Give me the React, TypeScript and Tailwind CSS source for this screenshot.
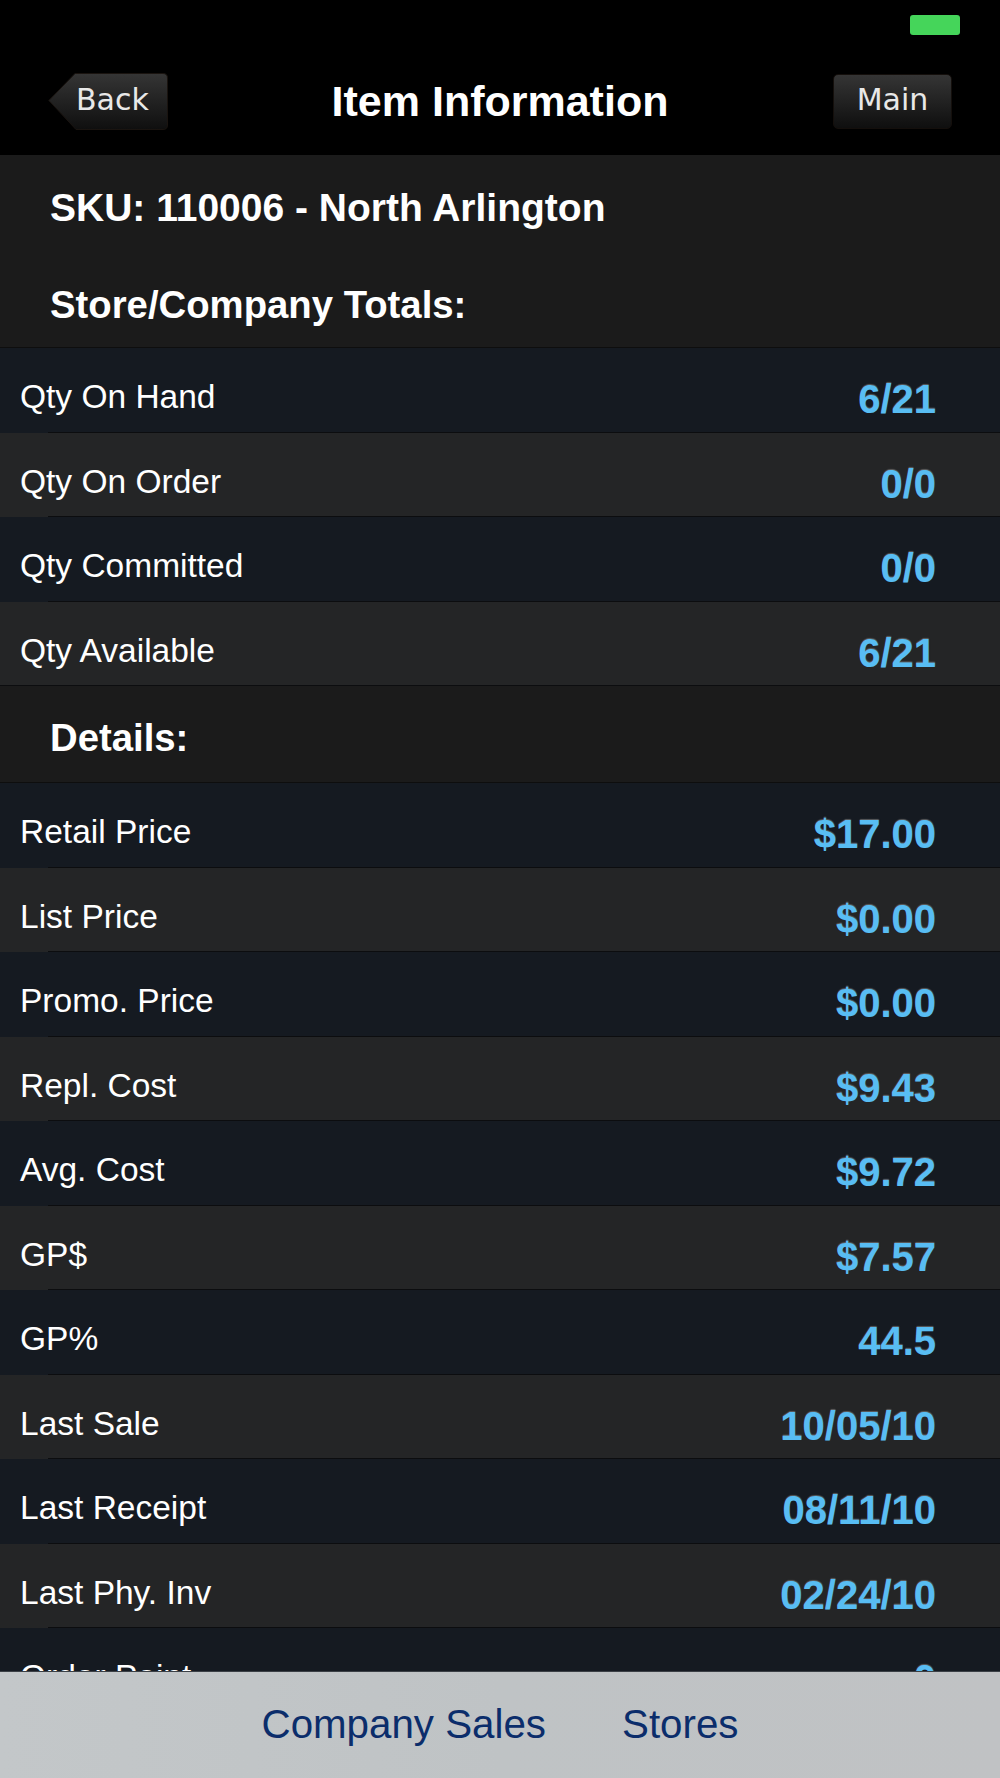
const totals = [
  { label: 'Qty On Hand', value: '6/21' },
  { label: 'Qty On Order', value: '0/0' },
  { label: 'Qty Committed', value: '0/0' },
  { label: 'Qty Available', value: '6/21' },
]

const details = [
  { label: 'Retail Price', value: '$17.00' },
  { label: 'List Price', value: '$0.00' },
  { label: 'Promo. Price', value: '$0.00' },
  { label: 'Repl. Cost', value: '$9.43' },
  { label: 'Avg. Cost', value: '$9.72' },
  { label: 'GP$', value: '$7.57' },
  { label: 'GP%', value: '44.5' },
  { label: 'Last Sale', value: '10/05/10' },
  { label: 'Last Receipt', value: '08/11/10' },
  { label: 'Last Phy. Inv', value: '02/24/10' },
  { label: 'Order Point', value: '0' },
]

function BackButton() {
  return (
    <button className="relative w-[120px] h-[57px] flex items-center pl-[28px] pb-[4px]">
      <svg className="absolute inset-0" width="120" height="57" viewBox="0 0 120 57">
        <defs>
          <linearGradient id="backFill" x1="0" y1="0" x2="0" y2="1">
            <stop offset="0" stopColor="#353535" />
            <stop offset="0.5" stopColor="#222" />
            <stop offset="1" stopColor="#0f0f0f" />
          </linearGradient>
        </defs>
        <path
          d="M27 0.5 H115 Q119.5 0.5 119.5 5 V52 Q119.5 56.5 115 56.5 H28 L0.8 27.5 Z"
          fill="url(#backFill)"
          stroke="#1a1410"
        />
      </svg>
      <span className="relative font-['DejaVu_Sans',sans-serif] text-[30px] leading-none text-[#e8e8e8]">
        Back
      </span>
    </button>
  )
}

function MainButton() {
  return (
    <button className="w-[119px] h-[55px] rounded-[5px] border border-[#140f0c] bg-gradient-to-b from-[#353535] via-[#222] to-[#0f0f0f] flex items-center justify-center pb-[4px]">
      <span className="font-['DejaVu_Sans',sans-serif] text-[30px] leading-none text-[#e8e8e8]">
        Main
      </span>
    </button>
  )
}

function Row({ label, value, dark, full }: { label: string; value: string; dark: boolean; full?: boolean }) {
  return (
    <div className={`h-[84.5px] shrink-0 flex flex-col ${dark ? 'bg-[#151a21]' : 'bg-[#242526]'}`}>
      <div className="flex-1 flex items-center justify-between pl-[20px] pr-[64px] pt-[14px]">
        <span className="text-[33.5px] leading-none text-white">{label}</span>
        <span className="mt-[5px] text-[40px] font-bold leading-none text-[#58bdf3] [text-shadow:0_-1px_1px_rgba(120,120,120,0.7)]">
          {value}
        </span>
      </div>
      <div className={`h-px bg-[#0c0d0f] ${full ? '' : 'ml-[48px]'}`} />
    </div>
  )
}

export default function App() {
  return (
    <div className="w-[1000px] h-[1778px] flex flex-col overflow-hidden bg-black font-['Liberation_Sans',Arial,sans-serif]">
      <div className="h-[155px] shrink-0 flex flex-col bg-black">
        <div className="h-[50px] flex justify-end pt-[15px] pr-[40px]">
          <div className="w-[50px] h-[20px] rounded-[3px] bg-[#45d55a]" />
        </div>
        <div className="flex-1 grid grid-cols-[1fr_auto_1fr] items-center px-[48px] pb-[2px]">
          <div className="flex justify-start">
            <BackButton />
          </div>
          <h1 className="text-[43px] font-bold leading-none text-white">Item Information</h1>
          <div className="flex justify-end">
            <MainButton />
          </div>
        </div>
      </div>

      <div className="flex-1 flex flex-col overflow-hidden">
        <div className="h-[193px] shrink-0 bg-[#1b1b1b] border-b border-[#0e0e0e] pl-[50px] pt-[33px] flex flex-col gap-[59px]">
          <p className="text-[39px] font-bold leading-none text-white">SKU: 110006 - North Arlington</p>
          <p className="text-[38.3px] font-bold leading-none text-white">Store/Company Totals:</p>
        </div>
        {totals.map((r, i) => (
          <Row key={r.label} label={r.label} value={r.value} dark={i % 2 === 0} full={i === totals.length - 1} />
        ))}
        <div className="h-[97px] shrink-0 bg-[#1b1b1b] border-b border-[#0e0e0e] pl-[50px] pt-[33px]">
          <p className="text-[38.3px] font-bold leading-none text-white">Details:</p>
        </div>
        {details.map((r, i) => (
          <Row key={r.label} label={r.label} value={r.value} dark={i % 2 === 0} />
        ))}
      </div>

      <div className="h-[107px] shrink-0 border-t border-[#3b4046] bg-gradient-to-r from-[#c3c7c9] via-[#bfc3c5] to-[#c0c2c4] flex items-center justify-center gap-[76px]">
        <button className="text-[40.3px] leading-none text-[#0b2d6b]">Company Sales</button>
        <button className="text-[40.3px] leading-none text-[#0b2d6b]">Stores</button>
      </div>
    </div>
  )
}
